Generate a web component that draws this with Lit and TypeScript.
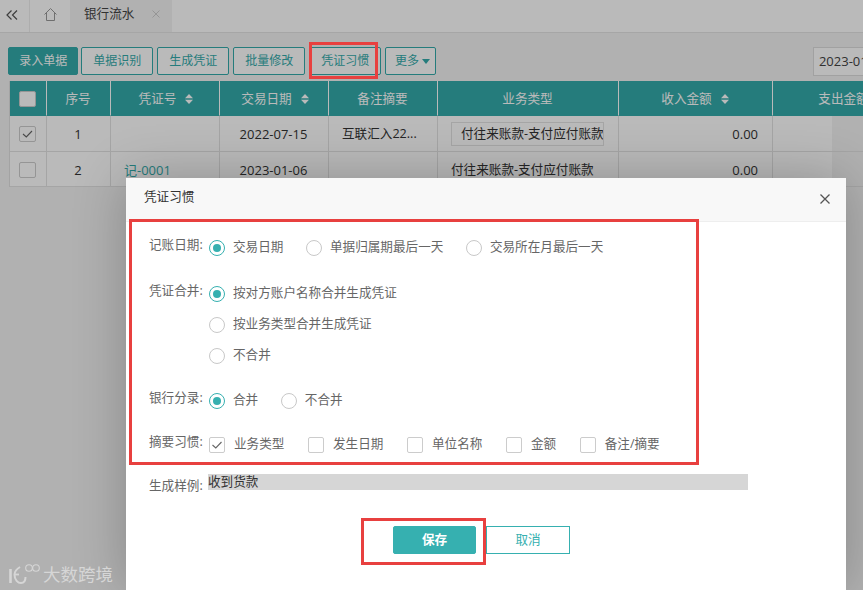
import { LitElement, html, css, svg } from "lit";
import { customElement } from "lit/decorators.js";

const sort = html`<svg class="sort" width="8" height="12" viewBox="0 0 8 12"><path d="M4 1 8 5.200H0zM0 6.800h8L4 11z" fill="currentColor"/></svg>`;
const tick = svg`<path d="M3.500 8 6.800 11 12.500 5" fill="none" stroke="#666" stroke-width="1.100"/>`;

@customElement("app-root")
export class AppRoot extends LitElement {
  static styles = css`
    :host { display: block; position: relative; width: 863px; height: 590px; overflow: hidden; background: #f3f3f3; color: #333;
      font: 12.6px/20px "Open Sans", "Noto Sans CJK SC", sans-serif; }
    * { box-sizing: border-box; }
    .tabs { display: flex; height: 33px; border-bottom: 1px solid #e4e4e4; background: #fff; }
    .tabs > div { display: flex; align-items: center; }
    .back { width: 30px; border-right: 1px solid #eee; padding: 0 0 3px 6px; }
    .home { width: 40px; justify-content: center; padding-bottom: 4px; }
    .tab { width: 102px; background: #f3f3f3; gap: 18px; color: #444; padding: 0 0 4px 14px; }
    .toolbar { display: flex; gap: 3.600px; margin: 14px 0 6px 8px; height: 28px; }
    .btn { flex: none; height: 28px; padding: 0 11.200px; border: 1px solid #34abab; border-radius: 2px; background: #fff; color: #34abab;
      display: flex; align-items: center; gap: 3px; white-space: nowrap; font-size: 12px; }
    .btn.fill { background: #34abab; color: #fff; margin-right: -1px; padding: 0 10.200px; }
    .btn.more { padding: 0 5px 0 9px; }
    .caret { width: 0; height: 0; border: 4.500px solid transparent; border-top: 5.500px solid #34abab; border-bottom: 0; }
    .date { flex: none; width: 100px; margin-left: 373.400px; height: 29px; border: 1px solid #ddd; background: #fff; padding: 3px 0 0 5px; color: #444; white-space: nowrap; font-size: 13px; }
    .table { display: grid; grid-template-columns: 37px 64px 109px 109px 109px 181px 154px 160px; grid-template-rows: 35px 36px 35px;
      width: 823px; margin-left: 9px; border-left: 1px solid #e0e0e0; background: #fff; }
    .table > div { display: flex; align-items: center; justify-content: center; gap: 9px; padding: 1px 1px 0 0; border-right: 1px solid #e2e2e2; border-bottom: 1px solid #e2e2e2;
      white-space: nowrap; overflow: hidden; }
    .table > .h { background: #34abab; color: #fff; border-right-color: #fff; border-bottom-color: #34abab; }
    .table > .s { padding-left: 3px; }
    .sort { flex: none; }
    .table > .l { justify-content: flex-start; padding-left: 13px; }
    .table > .r { justify-content: flex-end; padding-right: 14px; }
    .table > .num { font-size: 13px; }
    .link { color: #34abab; }
    .box { display: block; flex: none; width: 16px; height: 16px; border: 1px solid #ccc; border-radius: 2px; background: #fff; }
    .box svg { display: block; margin: -1px; }
    .table .box { width: 17px; margin-right: 1px; }
    .select { width: 153px; height: 24px; border: 1px solid #e2e2e2; padding: 1px 0 0 9px; overflow: hidden; }
    .overlay { position: absolute; inset: 0; background: rgba(0,0,0,.27); }
    .modal { position: absolute; left: 126px; top: 178px; width: 720px; height: 412px; background: #fff; box-shadow: 0 0 50px rgba(0,0,0,.24); color: #666; }
    .head { display: flex; align-items: center; justify-content: space-between; height: 44px; padding: 0 16px 2px 18px; background: #f8f8f8; border-bottom: 1px solid #eee; color: #333; }
    .title { margin-bottom: 4px; }
    .body { padding: 16px 0 0 23px; }
    .row { display: flex; margin-bottom: 25px; }
    .row.a { margin-bottom: 26px; }
    .row.b { margin-bottom: 24px; }
    .row.c { margin-bottom: 0; }
    .label { flex: none; width: 60px; margin-top: -3px; white-space: nowrap; }
    .opts { display: flex; flex-direction: column; gap: 11px; }
    .line { display: flex; gap: 22.600px; height: 20px; }
    .opt { display: flex; align-items: center; gap: 8px; white-space: nowrap; }
    .txt { margin-top: -2px; }
    .radio { flex: none; display: flex; align-items: center; justify-content: center; width: 16px; height: 16px; border: 1.500px solid #c8c8c8; border-radius: 50%; }
    .radio.on { border-color: #36b0b0; }
    .radio.on::after { content: ""; width: 8px; height: 8px; border-radius: 50%; background: #36b0b0; }
    .checks { display: flex; gap: 23.600px; height: 20px; }
    .checks .opt { gap: 9px; }
    .sample { display: flex; margin-top: 19px; height: 16px; }
    .sample .label { margin-top: 2px; }
    .bar { width: 540px; height: 16px; background: #d6d6d6; color: #333; line-height: 16px; margin-left: -1px; }
    .actions { display: flex; gap: 10px; margin: 36px 0 0 244px; }
    .act { height: 28px; width: 83px; display: flex; align-items: center; justify-content: center; border: 1px solid #36b0b0; border-radius: 2px; color: #36b0b0; }
    .act.save { background: #36b0b0; color: #fff; font-weight: 700; }
    .act.cancel { width: 84px; border-radius: 0; }
    .mark { position: absolute; border: 3px solid #e8403f; pointer-events: none; }
    .m1 { left: 309px; top: 42px; width: 69px; height: 37px; }
    .m2 { left: 129px; top: 219px; width: 570px; height: 246px; }
    .m3 { left: 361px; top: 518px; width: 125px; height: 47px; }
    .wm { position: absolute; left: 8px; top: 561px; display: flex; align-items: center; gap: 2px; color: #d6d6d6; font-size: 17.500px; line-height: 26px; }
  `;

  private radio(text: string, on = false) {
    return html`<div class="opt"><span class="radio ${on ? "on" : ""}"></span><span class="txt">${text}</span></div>`;
  }
  private check(text: string, on = false) {
    return html`<div class="opt"><span class="box">${on ? html`<svg width="16" height="16" viewBox="0 0 16 16">${tick}</svg>` : ""}</span><span class="txt">${text}</span></div>`;
  }

  render() {
    return html`
      <div class="tabs">
        <div class="back"><svg width="12" height="10" viewBox="0 0 12 10"><path d="M5.500.500 1 5l4.500 4.500M11 .5 6.500 5 11 9.500" fill="none" stroke="#555" stroke-width="1.200"/></svg></div>
        <div class="home"><svg width="13" height="13" viewBox="0 0 13 13"><path d="M.5 6.500 6.500.5l6 6M2.500 5v7.500h8V5" fill="none" stroke="#999" stroke-width="1"/></svg></div>
        <div class="tab"><span>银行流水</span><svg width="8" height="8" viewBox="0 0 8 8"><path d="M.5.500l7 7M7.500.5l-7 7" stroke="#ccc" stroke-width="1"/></svg></div>
      </div>
      <div class="toolbar">
        <div class="btn fill">录入单据</div>
        <div class="btn">单据识别</div>
        <div class="btn">生成凭证</div>
        <div class="btn">批量修改</div>
        <div class="btn">凭证习惯</div>
        <div class="btn more">更多<span class="caret"></span></div>
        <div class="date">2023-01</div>
      </div>
      <div class="table">
        <div class="h"><span class="box"></span></div>
        <div class="h">序号</div>
        <div class="h s">凭证号${sort}</div>
        <div class="h s">交易日期${sort}</div>
        <div class="h">备注摘要</div>
        <div class="h">业务类型</div>
        <div class="h">收入金额${sort}</div>
        <div class="h">支出金额${sort}</div>

        <div><span class="box"><svg width="17" height="16" viewBox="0 0 16 16">${tick}</svg></span></div>
        <div class="num">1</div>
        <div></div>
        <div class="num">2022-07-15</div>
        <div class="l">互联汇入22...</div>
        <div><div class="select">付往来账款-支付应付账款</div></div>
        <div class="r num">0.00</div>
        <div></div>

        <div><span class="box"></span></div>
        <div class="num">2</div>
        <div class="l link num">记-0001</div>
        <div class="num">2023-01-06</div>
        <div></div>
        <div class="l">付往来账款-支付应付账款</div>
        <div class="r num">0.00</div>
        <div></div>
      </div>

      <div class="overlay"></div>

      <div class="modal">
        <div class="head"><span class="title">凭证习惯</span>
          <svg width="10" height="10" viewBox="0 0 10 10"><path d="M.5.500l9 9M9.500.5l-9 9" stroke="#555" stroke-width="1.300"/></svg>
        </div>
        <div class="body">
          <div class="row a">
            <div class="label">记账日期:</div>
            <div class="line">${this.radio("交易日期", true)}${this.radio("单据归属期最后一天")}${this.radio("交易所在月最后一天")}</div>
          </div>
          <div class="row">
            <div class="label">凭证合并:</div>
            <div class="opts">
              <div class="line">${this.radio("按对方账户名称合并生成凭证", true)}</div>
              <div class="line">${this.radio("按业务类型合并生成凭证")}</div>
              <div class="line">${this.radio("不合并")}</div>
            </div>
          </div>
          <div class="row b">
            <div class="label">银行分录:</div>
            <div class="line">${this.radio("合并", true)}${this.radio("不合并")}</div>
          </div>
          <div class="row c">
            <div class="label">摘要习惯:</div>
            <div class="checks">${this.check("业务类型", true)}${this.check("发生日期")}${this.check("单位名称")}${this.check("金额")}${this.check("备注/摘要")}</div>
          </div>
          <div class="sample"><div class="label">生成样例:</div><div class="bar">收到货款</div></div>
          <div class="actions"><div class="act save">保存</div><div class="act cancel">取消</div></div>
        </div>
      </div>

      <div class="mark m1"></div>
      <div class="mark m2"></div>
      <div class="mark m3"></div>

      <div class="wm">
        <svg width="33" height="23" viewBox="0 0 33 23" fill="none" stroke="#d6d6d6">
          <path d="M2.500 6v14" stroke-width="2.600"/>
          <path d="M12 4C8 6.500 6.500 9 6.500 11.500 6.500 17 10 20 13 20c3 0 4.500-2.500 4.500-6" stroke-width="2"/>
          <path d="M7 11.500h4" stroke-width="1.800"/>
          <circle cx="21" cy="5" r="3.300" stroke-width="1.100"/>
          <circle cx="28" cy="5" r="3.300" stroke-width="1.100"/>
        </svg>
        <span>大数跨境</span>
      </div>
    `;
  }
}
